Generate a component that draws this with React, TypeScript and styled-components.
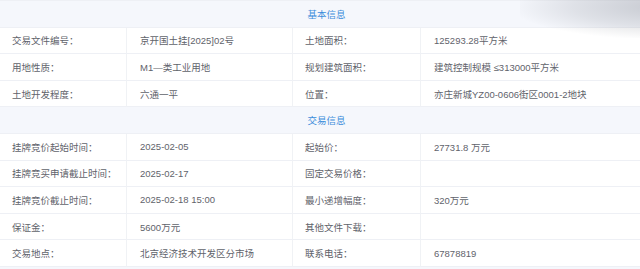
import React from "react";
import styled, { createGlobalStyle } from "styled-components";

type Cell = { label: string; value?: string };
type Section = { title: string; rows: [Cell, Cell][] };

const SECTIONS: Section[] = [
  {
    title: "基本信息",
    rows: [
      [
        { label: "交易文件编号：", value: "京开国土挂[2025]02号" },
        { label: "土地面积：", value: "125293.28平方米" },
      ],
      [
        { label: "用地性质：", value: "M1—类工业用地" },
        { label: "规划建筑面积：", value: "建筑控制规模 ≤313000平方米" },
      ],
      [
        { label: "土地开发程度：", value: "六通一平" },
        { label: "位置：", value: "亦庄新城YZ00-0606街区0001-2地块" },
      ],
    ],
  },
  {
    title: "交易信息",
    rows: [
      [
        { label: "挂牌竞价起始时间：", value: "2025-02-05" },
        { label: "起始价：", value: "27731.8 万元" },
      ],
      [
        { label: "挂牌竞买申请截止时间：", value: "2025-02-17" },
        { label: "固定交易价格：" },
      ],
      [
        { label: "挂牌竞价截止时间：", value: "2025-02-18 15:00" },
        { label: "最小递增幅度：", value: "320万元" },
      ],
      [
        { label: "保证金：", value: "5600万元" },
        { label: "其他文件下载：" },
      ],
      [
        { label: "交易地点：", value: "北京经济技术开发区分市场" },
        { label: "联系电话：", value: "67878819" },
      ],
    ],
  },
];

const GlobalStyle = createGlobalStyle`
  html, body {
    margin: 0;
    padding: 0;
    background: #f5f7fc;
  }
  body {
    font-family: "Liberation Sans", "Noto Sans CJK SC", sans-serif;
  }
`;

const App = () => {
  return (
    <>
      <GlobalStyle />
      <PageSC>
        <TableSC>
          {SECTIONS.map((section) => (
            <React.Fragment key={section.title}>
              <TitleSC>{section.title}</TitleSC>
              {section.rows.map(([left, right]) => (
                <React.Fragment key={left.label}>
                  <CellSC>{left.label}</CellSC>
                  <CellSC $value>{left.value}</CellSC>
                  <CellSC>{right.label}</CellSC>
                  <CellSC $value $last>
                    {right.value}
                  </CellSC>
                </React.Fragment>
              ))}
            </React.Fragment>
          ))}
        </TableSC>
        <ShadowSC />
      </PageSC>
    </>
  );
};

const PageSC = styled("div")`
  position: relative;
  width: 640px;
  height: 269px;
  overflow: hidden;
  background: #f5f7fc;
`;

const TableSC = styled("div")`
  display: grid;
  grid-template-columns: 127px 166px 128px 1fr;
  grid-auto-rows: 26.6px;
  border-top: 1px solid #eef0f5;
`;

const TitleSC = styled("div")`
  grid-column: 1 / -1;
  display: flex;
  align-items: center;
  justify-content: center;
  padding-left: 13px;

  background: #f5f7fc;
  border-bottom: 1px solid #eef0f5;

  color: #3b8ddb;
  font-size: 9.5px;
`;

const CellSC = styled("div")<{ $value?: boolean; $last?: boolean }>`
  display: flex;
  align-items: center;
  padding-left: ${({ $value }) => ($value ? "13px" : "12px")};

  background: #ffffff;
  border-bottom: 1px solid #eef0f5;
  border-right: ${({ $last }) => ($last ? "none" : "1px solid #f0f2f5")};

  color: #5f636b;
  font-size: 9.5px;
  white-space: nowrap;
`;

const ShadowSC = styled("div")`
  position: absolute;
  top: -10px;
  right: -30px;
  width: 150px;
  height: 48px;

  background: radial-gradient(
    ellipse at 100% 35%,
    rgba(60, 66, 80, 0.26) 0%,
    rgba(60, 66, 80, 0.12) 45%,
    rgba(60, 66, 80, 0) 75%
  );
  pointer-events: none;
`;

export default App;
